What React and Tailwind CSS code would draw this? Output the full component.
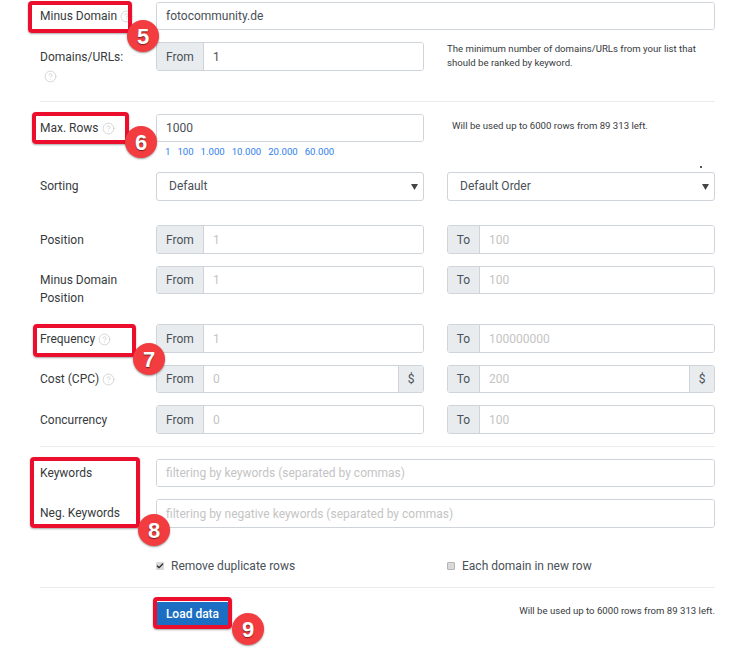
import React from 'react';
import { CircleHelp, Check } from 'lucide-react';

const Help = ({ className = '' }) => (
  <CircleHelp className={`inline-block w-[13px] h-[13px] text-[#cfcfcf] ${className}`} strokeWidth={1.6} />
);

function Group({ prefix, placeholder, value, suffix, h = 'h-[29px]' }) {
  return (
    <div className={`flex flex-1 min-w-0 ${h} border border-[#ced4da] rounded-[3px] overflow-hidden bg-white`}>
      {prefix && (
        <span
          className={`flex items-center justify-center shrink-0 bg-[#e9ecef] text-[#495057] border-r border-[#ced4da] ${prefix === 'From' ? 'w-[47px]' : 'w-[32px]'}`}
        >
          {prefix}
        </span>
      )}
      <input
        readOnly
        value={value || ''}
        placeholder={placeholder}
        className="flex-1 min-w-0 px-[9px] bg-white text-[#495057] outline-none placeholder:text-[#c4c4c4]"
      />
      {suffix && (
        <span className="flex items-center justify-center shrink-0 w-[25px] bg-[#e9ecef] text-[#495057] border-l border-[#ced4da]">
          {suffix}
        </span>
      )}
    </div>
  );
}

function Row({ label, top, h = 'h-[29px]', pad = 'pt-[5px]', children }) {
  return (
    <div className={`flex ${top} ${h} shrink-0`}>
      <div className={`w-[116px] shrink-0 ${pad} leading-[18px] text-[#373a3c]`}>{label}</div>
      <div className="flex flex-1 gap-[23px] min-w-0">{children}</div>
    </div>
  );
}

function Select({ children }) {
  return (
    <div className="flex flex-1 items-center justify-between h-[29px] pl-[12px] pr-[5px] border border-[#ced4da] rounded-[3px] bg-white text-[#495057]">
      <span className="-mt-[2px]">{children}</span>
      <svg width="7" height="6" viewBox="0 0 7 6" className="fill-[#444]">
        <path d="M0 0h7L3.5 6z" />
      </svg>
    </div>
  );
}

const Divider = ({ top }) => <div className={`h-px bg-[#ebebeb] shrink-0 ${top}`} />;

function Note({ className }) {
  return (
    <div className={`absolute border-[4px] border-[#ec0f2d] rounded-[4px] shadow-[0_1px_2px_rgba(0,0,0,0.35)] ${className}`} />
  );
}

function Badge({ n, className }) {
  return (
    <div
      className={`absolute flex items-center justify-center w-[32px] h-[32px] rounded-full bg-[#f23c3f] text-white text-[22px] font-bold font-['Liberation_Sans',sans-serif] shadow-[0_1px_2px_rgba(0,0,0,0.4)] [text-shadow:0_1px_1px_rgba(0,0,0,0.5)] ${className}`}
    >
      {n}
    </div>
  );
}

const Half = ({ children }) => <div className="flex flex-1 min-w-0">{children}</div>;

export default function App() {
  return (
    <div className="relative w-[738px] h-[654px] overflow-hidden bg-white font-['Roboto',sans-serif] text-[12px]">
      <div className="flex flex-col pl-[40px] pr-[23px] pt-[2px]">
        <Row
          h="h-[28px]"
          label={
            <>
              Minus Domain <Help className="-mt-[1px] align-middle" />
            </>
          }
        >
          <Group value="fotocommunity.de" h="h-[28px]" />
        </Row>
        <Row
          top="mt-[12px]"
          pad="pt-[6px]"
          label={
            <>
              Domains/URLs:
              <br />
              <Help className="ml-[4px] mt-[2px]" />
            </>
          }
        >
          <Half>
            <Group prefix="From" value="1" />
          </Half>
          <div className="flex-1 min-w-0 text-[9.6px] leading-[14.4px] text-[#373a3c]">
            The minimum number of domains/URLs from your list that
            <br />
            should be ranked by keyword.
          </div>
        </Row>
        <Divider top="mt-[30px]" />
        <Row
          top="mt-[12px]"
          label={
            <>
              Max. Rows <Help className="-mt-[1px] align-middle" />
            </>
          }
          h="h-[28px]"
        >
          <Half>
            <Group value="1000" h="h-[28px]" />
          </Half>
          <div className="flex-1 min-w-0">
            <div className="ml-[5px] mt-[4px] text-[9.6px] leading-[15px] text-[#373a3c]">
              Will be used up to 6000 rows from 89 313 left.
            </div>
          </div>
        </Row>
        <div className="flex gap-[7px] pl-[125px] mt-[4px] h-[12px] shrink-0 text-[9.6px] leading-[12px] text-[#2f80ed]">
          <span>1</span>
          <span>100</span>
          <span>1.000</span>
          <span>10.000</span>
          <span>20.000</span>
          <span>60.000</span>
        </div>
        <Row top="mt-[14px]" label="Sorting">
          <Select>Default</Select>
          <Select>Default Order</Select>
        </Row>
        <Row top="mt-[24px]" pad="pt-[6px]" label="Position">
          <Group prefix="From" placeholder="1" />
          <Group prefix="To" placeholder="100" />
        </Row>
        <Row top="mt-[12px]" h="h-[28px]" label={<>Minus Domain<br />Position</>}>
          <Group prefix="From" placeholder="1" h="h-[28px]" />
          <Group prefix="To" placeholder="100" h="h-[28px]" />
        </Row>
        <Row
          top="mt-[30px]"
          pad="pt-[6px]"
          label={
            <>
              Frequency <Help className="-mt-[1px] align-middle" />
            </>
          }
        >
          <Group prefix="From" placeholder="1" />
          <Group prefix="To" placeholder="100000000" />
        </Row>
        <Row
          top="mt-[12px]"
          h="h-[28px]"
          pad="pt-[5px]"
          label={
            <>
              Cost (CPC) <Help className="-mt-[1px] align-middle" />
            </>
          }
        >
          <Group prefix="From" placeholder="0" suffix="$" h="h-[28px]" />
          <Group prefix="To" placeholder="200" suffix="$" h="h-[28px]" />
        </Row>
        <Row top="mt-[12px]" pad="pt-[6px]" label="Concurrency">
          <Group prefix="From" placeholder="0" />
          <Group prefix="To" placeholder="100" />
        </Row>
        <Divider top="mt-[12px]" />
        <Row top="mt-[12px]" h="h-[28px]" label="Keywords">
          <Group placeholder="filtering by keywords (separated by commas)" h="h-[28px]" />
        </Row>
        <Row top="mt-[12px]" label="Neg. Keywords">
          <Group placeholder="filtering by negative keywords (separated by commas)" />
        </Row>
        <div className="flex gap-[23px] pl-[116px] mt-[30px] h-[16px] shrink-0 items-center text-[#495057]">
          <label className="flex flex-1 items-center gap-[7px]">
            <span className="flex items-center justify-center w-[8px] h-[8px] rounded-[1px] bg-[#d9d9d9]">
              <Check className="w-[8px] h-[8px] text-[#333]" strokeWidth={4} />
            </span>
            Remove duplicate rows
          </label>
          <label className="flex flex-1 items-center gap-[7px]">
            <span className="w-[8px] h-[8px] rounded-[1px] bg-[#d9d9d9] border border-[#b5b5b5]" />
            Each domain in new row
          </label>
        </div>
        <Divider top="mt-[13px]" />
        <div className="flex items-center justify-between pl-[116px] mt-[14px]">
          <button className="h-[24px] w-[73px] rounded-[2px] bg-[#1b6ec2] text-white font-medium">Load data</button>
          <span className="-mt-[5px] text-[9.6px] text-[#373a3c]">Will be used up to 6000 rows from 89 313 left.</span>
        </div>
      </div>

      <div className="absolute left-[700px] top-[166px] w-[2px] h-[2px] bg-[#555]" />

      <Note className="left-[28px] top-[1px] w-[104px] h-[32px]" />
      <Note className="left-[32px] top-[112px] w-[97px] h-[32px]" />
      <Note className="left-[33px] top-[324px] w-[103px] h-[33px]" />
      <Note className="left-[30px] top-[457px] w-[110px] h-[71px]" />
      <Note className="left-[153px] top-[597px] w-[79px] h-[32px]" />

      <Badge n="5" className="left-[127px] top-[20px]" />
      <Badge n="6" className="left-[125px] top-[126px]" />
      <Badge n="7" className="left-[133px] top-[343px]" />
      <Badge n="8" className="left-[138px] top-[514px]" />
      <Badge n="9" className="left-[232px] top-[613px]" />
    </div>
  );
}
